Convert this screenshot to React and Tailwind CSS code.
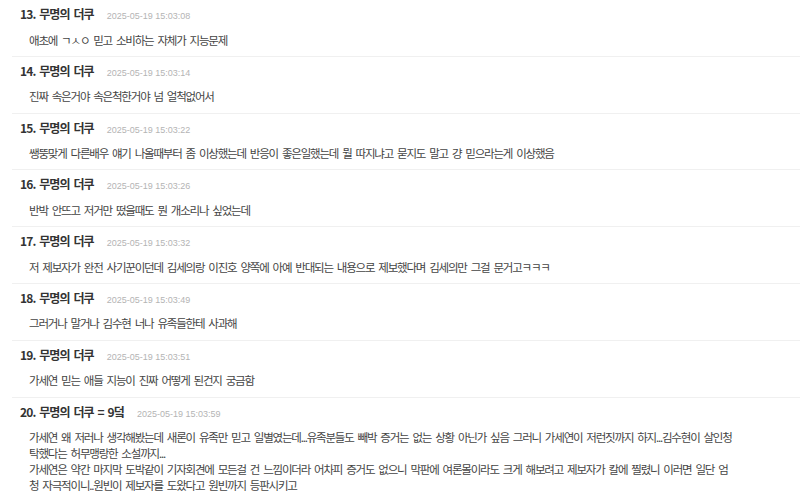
import React from 'react';

const comments = [
  { no: 13, time: '2025-05-19 15:03:08', lines: ['애초에 ㄱㅅㅇ 믿고 소비하는 자체가 지능문제'] },
  { no: 14, time: '2025-05-19 15:03:14', lines: ['진짜 속은거야 속은척한거야 넘 얼척없어서'] },
  {
    no: 15,
    time: '2025-05-19 15:03:22',
    lines: ['쌩뚱맞게 다른배우 얘기 나올때부터 좀 이상했는데 반응이 좋은일했는데 뭘 따지냐고 묻지도 말고 걍 믿으라는게 이상했음'],
  },
  { no: 16, time: '2025-05-19 15:03:26', lines: ['반박 안뜨고 저거만 떴을때도 뭔 개소리나 싶었는데'] },
  {
    no: 17,
    time: '2025-05-19 15:03:32',
    lines: ['저 제보자가 완전 사기꾼이던데 김세의랑 이진호 양쪽에 아예 반대되는 내용으로 제보했다며 김세의만 그걸 문거고ㅋㅋㅋ'],
  },
  { no: 18, time: '2025-05-19 15:03:49', lines: ['그러거나 말거나 김수현 너나 유족들한테 사과해'] },
  { no: 19, time: '2025-05-19 15:03:51', lines: ['가세연 믿는 애들 지능이 진짜 어떻게 된건지 궁금함'] },
  {
    no: 20,
    tag: ' = 9덬',
    time: '2025-05-19 15:03:59',
    lines: [
      '가세연 왜 저러나 생각해봤는데 새론이 유족만 믿고 일별였는데...유족분들도 빼박 증거는 없는 상황 아닌가 싶음 그러니 가세연이 저런짓까지 하지...김수현이 살인청',
      '탁했다는 허무맹랑한 소설까지...',
      '가세연은 약간 마지막 도박같이 기자회견에 모든걸 건 느낌이더라 어차피 증거도 없으니 막판에 여론몰이라도 크게 해보려고 제보자가 칼에 찔렸니 이러면 일단 엄',
      '청 자극적이니..원빈이 제보자를 도왔다고 원빈까지 등판시키고',
    ],
  },
];

const Comment = ({ c }) => (
  <li className="ml-[12px] border-b border-[#f0f0f0] pl-[8px] pr-2 pt-[5px] pb-[8.3px]">
    <div className="flex items-baseline h-[19px]">
      <span className="text-[12px] font-bold text-[#333] tracking-[-0.9px] [word-spacing:2px]">
        {c.no}. 무명의 더쿠{c.tag}
      </span>
      <span className="ml-[13px] text-[9px] text-[#b4b4b4] font-['Liberation_Sans',sans-serif]">{c.time}</span>
    </div>
    <div className="mt-[7.5px] pl-[9px] text-[11.5px] leading-[16px] text-[#444] tracking-[-1.2px] [word-spacing:2.6px]">
      {c.lines.map((line, i) => (
        <div key={i} className="whitespace-nowrap">
          {line}
        </div>
      ))}
    </div>
  </li>
);

export default function App() {
  return (
    <div className="w-[800px] h-[493px] overflow-hidden bg-white font-['Noto_Sans_CJK_KR',sans-serif]">
      <ul>
        {comments.map((c) => (
          <Comment key={c.no} c={c} />
        ))}
      </ul>
    </div>
  );
}
